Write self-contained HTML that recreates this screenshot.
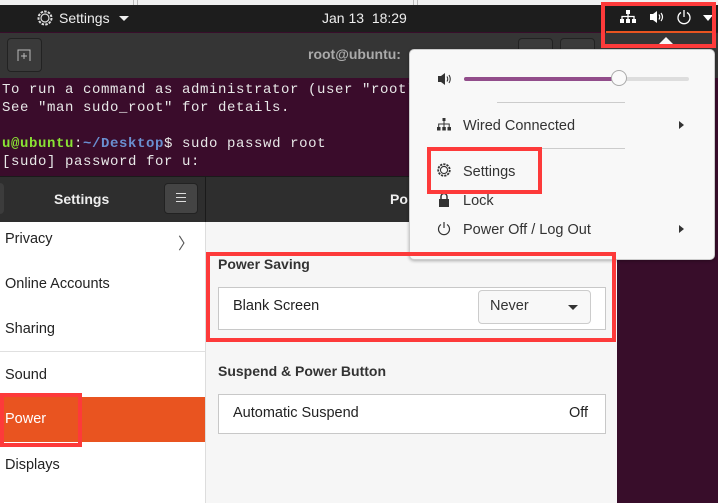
<!DOCTYPE html>
<html><head><meta charset="utf-8"><style>
*{margin:0;padding:0;box-sizing:border-box}
body{width:718px;height:503px;overflow:hidden;position:relative;background:#380d2a;font-family:"Liberation Sans",sans-serif;font-size:14.5px}
.a{position:absolute}
.mono{font-family:"Liberation Mono","DejaVu Sans Mono",monospace;font-size:14px;color:#e8e8e8;white-space:pre;letter-spacing:0.6px}
.red{position:absolute;border:4px solid #fd3a3a}
.si{position:absolute;left:5px;color:#222;font-size:14.5px}
</style></head><body>
<div class="a" style="left:0;top:0;width:718px;height:6px;background:#f0f0f0"></div>
<div class="a" style="left:133px;top:0;width:1px;height:6px;background:#bbb"></div>
<div class="a" style="left:137px;top:0;width:1px;height:6px;background:#bbb"></div>
<div class="a" style="left:413px;top:0;width:1px;height:6px;background:#bbb"></div>
<div class="a" style="left:417px;top:0;width:1px;height:6px;background:#bbb"></div>
<div class="a" style="left:0;top:5px;width:718px;height:27px;background:#1d1d1d"></div>
<svg class="a" style="left:36px;top:9px" width="18" height="18" viewBox="0 0 18 18"><circle cx="9" cy="9" r="6.5" fill="none" stroke="#ddd" stroke-width="2" stroke-dasharray="2.5 1.2"/><circle cx="9" cy="9" r="4" fill="none" stroke="#ddd" stroke-width="1.2"/></svg>
<div class="a" style="left:59px;top:10px;color:#eee;font-size:14px">Settings</div>
<div class="a" style="left:119px;top:16px;border-left:5px solid transparent;border-right:5px solid transparent;border-top:5px solid #eee"></div>
<div class="a" style="left:322px;top:10px;color:#eee;font-size:14px">Jan 13&nbsp; 18:29</div>
<svg class="a" style="left:619px;top:9px" width="18" height="16" viewBox="0 0 18 16"><rect x="7" y="1" width="4" height="4" fill="#fff"/><rect x="1" y="10" width="4" height="4" fill="#fff"/><rect x="13" y="10" width="4" height="4" fill="#fff"/><rect x="7" y="10" width="4" height="4" fill="#fff"/><path d="M9 5v5M3 10V7.5h12V10" stroke="#fff" stroke-width="1.3" fill="none"/></svg>
<svg class="a" style="left:649px;top:9px" width="16" height="16" viewBox="0 0 16 16"><path d="M1 5h3l4-3v12l-4-3H1z" fill="#fff"/><path d="M10 5.5q1.5 2.5 0 5M12 4q3 4 0 8" stroke="#fff" stroke-width="1.2" fill="none"/></svg>
<svg class="a" style="left:676px;top:9px" width="16" height="16" viewBox="0 0 16 16"><path d="M5 3.5A6 6 0 1 0 11 3.5" stroke="#fff" stroke-width="1.3" fill="none"/><path d="M8 1v7" stroke="#fff" stroke-width="1.3"/></svg>
<div class="a" style="left:703px;top:15px;border-left:5px solid transparent;border-right:5px solid transparent;border-top:6px solid #fff"></div>
<div class="a" style="left:606px;top:31px;width:108px;height:2px;background:#e95420"></div>
<div class="a" style="left:0;top:33px;width:718px;height:45px;background:#353535"></div>
<div class="a" style="left:7px;top:38px;width:35px;height:34px;border:1px solid #222;border-radius:4px;background:#3a3a3a"></div>
<svg class="a" style="left:17px;top:48px" width="14" height="14" viewBox="0 0 14 14"><path d="M1 13V2h12v11M7 5v6M4 8h6" stroke="#bbb" stroke-width="1" fill="none"/></svg>
<div class="a" style="left:308px;top:46px;color:#aaa;font-weight:bold;font-size:14px">root@ubuntu:</div>
<div class="a" style="left:518px;top:38px;width:35px;height:30px;border:1px solid #222;border-radius:4px;background:#3a3a3a"></div>
<div class="a" style="left:560px;top:38px;width:35px;height:30px;border:1px solid #222;border-radius:4px;background:#3a3a3a"></div>
<div class="a" style="left:0;top:78px;width:718px;height:98px;background:#3a0c2b"></div>
<div class="a mono" style="left:2px;top:81px;line-height:18px">To run a command as administrator (user "root"), use "sudo &lt;command&gt;".
See "man sudo_root" for details.

<b style="color:#8ae234">u@ubuntu</b>:<b style="color:#6a8fd0">~/Desktop</b>$ sudo passwd root
[sudo] password for u:</div>
<div class="a" style="left:0;top:176px;width:409px;height:46px;background:#2e2e2e;border-top:1px solid #1a1a1a"></div>
<div class="a" style="left:-5px;top:183px;width:9px;height:31px;background:#3c3c3c;border-radius:4px"></div>
<div class="a" style="left:54px;top:191px;color:#eee;font-weight:bold;font-size:14px">Settings</div>
<div class="a" style="left:164px;top:183px;width:34px;height:31px;background:#444;border-radius:4px;border:1px solid #222"></div>
<div class="a" style="left:176px;top:193px;width:10px;height:1px;background:#ddd;box-shadow:0 4px 0 #ddd,0 8px 0 #ddd"></div>
<div class="a" style="left:205px;top:176px;width:1px;height:46px;background:#1a1a1a"></div>
<div class="a" style="left:390px;top:191px;color:#eee;font-weight:bold;font-size:14px">Po</div>
<div class="a" style="left:0;top:222px;width:205px;height:281px;background:#fff"></div>
<div class="a" style="left:205px;top:222px;width:1px;height:281px;background:#ddd"></div>
<div class="si" style="top:231px">Privacy</div>
<div class="a" style="left:178px;top:230px;color:#555;font-size:16px">〉</div>
<div class="si" style="top:276px">Online Accounts</div>
<div class="si" style="top:321px">Sharing</div>
<div class="a" style="left:0;top:351px;width:205px;height:1px;background:#e0e0e0"></div>
<div class="si" style="top:367px">Sound</div>
<div class="a" style="left:0;top:397px;width:205px;height:45px;background:#e95420"></div>
<div class="si" style="top:411px;color:#fff">Power</div>
<div class="si" style="top:457px">Displays</div>
<div class="a" style="left:206px;top:222px;width:411px;height:281px;background:#f6f6f6"></div>
<div class="a" style="left:218px;top:256px;color:#333;font-weight:bold;font-size:14px">Power Saving</div>
<div class="a" style="left:218px;top:287px;width:388px;height:43px;background:#fff;border:1px solid #c8c8c8"></div>
<div class="a" style="left:233px;top:298px;color:#222">Blank Screen</div>
<div class="a" style="left:478px;top:290px;width:113px;height:34px;background:#f8f8f8;border:1px solid #ccc;border-radius:4px"></div>
<div class="a" style="left:490px;top:298px;color:#333">Never</div>
<div class="a" style="left:568px;top:305px;border-left:5px solid transparent;border-right:5px solid transparent;border-top:5px solid #333"></div>
<div class="a" style="left:218px;top:363px;color:#333;font-weight:bold;font-size:14px">Suspend &amp; Power Button</div>
<div class="a" style="left:218px;top:394px;width:388px;height:40px;background:#fff;border:1px solid #c8c8c8"></div>
<div class="a" style="left:233px;top:405px;color:#222">Automatic Suspend</div>
<div class="a" style="left:569px;top:405px;color:#222">Off</div>
<div class="a" style="left:409px;top:49px;width:306px;height:211px;background:#f8f8f8;border:1px solid #ccc;border-radius:5px;box-shadow:0 1px 3px rgba(0,0,0,.3)"></div>
<div class="a" style="left:659px;top:37px;border-left:7px solid transparent;border-right:7px solid transparent;border-bottom:7px solid #f8f8f8"></div>
<svg class="a" style="left:437px;top:72px" width="16" height="14" viewBox="0 0 16 14"><path d="M1 4h3l4-3v12l-4-3H1z" fill="#333"/><path d="M10 4.5q1.5 2.5 0 5M12 3q2.5 4 0 8" stroke="#333" stroke-width="1.1" fill="none"/></svg>
<div class="a" style="left:464px;top:77px;width:225px;height:4px;background:#ddd;border-radius:2px"></div>
<div class="a" style="left:464px;top:77px;width:156px;height:4px;background:#924d8b;border-radius:2px"></div>
<div class="a" style="left:611px;top:70px;width:16px;height:16px;border-radius:50%;background:#fafafa;border:1px solid #aaa"></div>
<div class="a" style="left:497px;top:102px;width:128px;height:1px;background:#ccc"></div>
<svg class="a" style="left:437px;top:118px" width="14" height="13" viewBox="0 0 14 13"><rect x="5.5" y="0" width="3" height="3" fill="#333"/><rect x="0" y="9" width="3.5" height="3.5" fill="#333"/><rect x="5.3" y="9" width="3.5" height="3.5" fill="#333"/><rect x="10.5" y="9" width="3.5" height="3.5" fill="#333"/><path d="M7 3v6M1.7 9V6h10.5v3" stroke="#333" fill="none"/></svg>
<div class="a" style="left:463px;top:118px;color:#333">Wired Connected</div>
<div class="a" style="left:679px;top:121px;border-top:4px solid transparent;border-bottom:4px solid transparent;border-left:5px solid #333"></div>
<div class="a" style="left:497px;top:148px;width:128px;height:1px;background:#ccc"></div>
<svg class="a" style="left:436px;top:162px" width="16" height="16" viewBox="0 0 18 18"><circle cx="9" cy="9" r="6.5" fill="none" stroke="#333" stroke-width="2" stroke-dasharray="2.5 1.2"/><circle cx="9" cy="9" r="4" fill="none" stroke="#333" stroke-width="1.2"/></svg>
<div class="a" style="left:463px;top:164px;color:#333">Settings</div>
<svg class="a" style="left:438px;top:192px" width="12" height="15" viewBox="0 0 12 15"><path d="M3 7V4.5a3 3 0 0 1 6 0V7" stroke="#333" stroke-width="1.5" fill="none"/><rect x="1" y="7" width="10" height="8" fill="#333"/></svg>
<div class="a" style="left:463px;top:193px;color:#333">Lock</div>
<svg class="a" style="left:437px;top:221px" width="14" height="15" viewBox="0 0 14 15"><path d="M4 3.5A5.5 5.5 0 1 0 10 3.5" stroke="#333" stroke-width="1.2" fill="none"/><path d="M7 1v6" stroke="#333" stroke-width="1.2"/></svg>
<div class="a" style="left:463px;top:222px;color:#333">Power Off / Log Out</div>
<div class="a" style="left:679px;top:225px;border-top:4px solid transparent;border-bottom:4px solid transparent;border-left:5px solid #333"></div>
<div class="red" style="left:601px;top:2px;width:115px;height:46px"></div>
<div class="red" style="left:427px;top:147px;width:115px;height:47px"></div>
<div class="red" style="left:206px;top:252px;width:410px;height:90px"></div>
<div class="red" style="left:0;top:393px;width:82px;height:54px"></div>
</body></html>
